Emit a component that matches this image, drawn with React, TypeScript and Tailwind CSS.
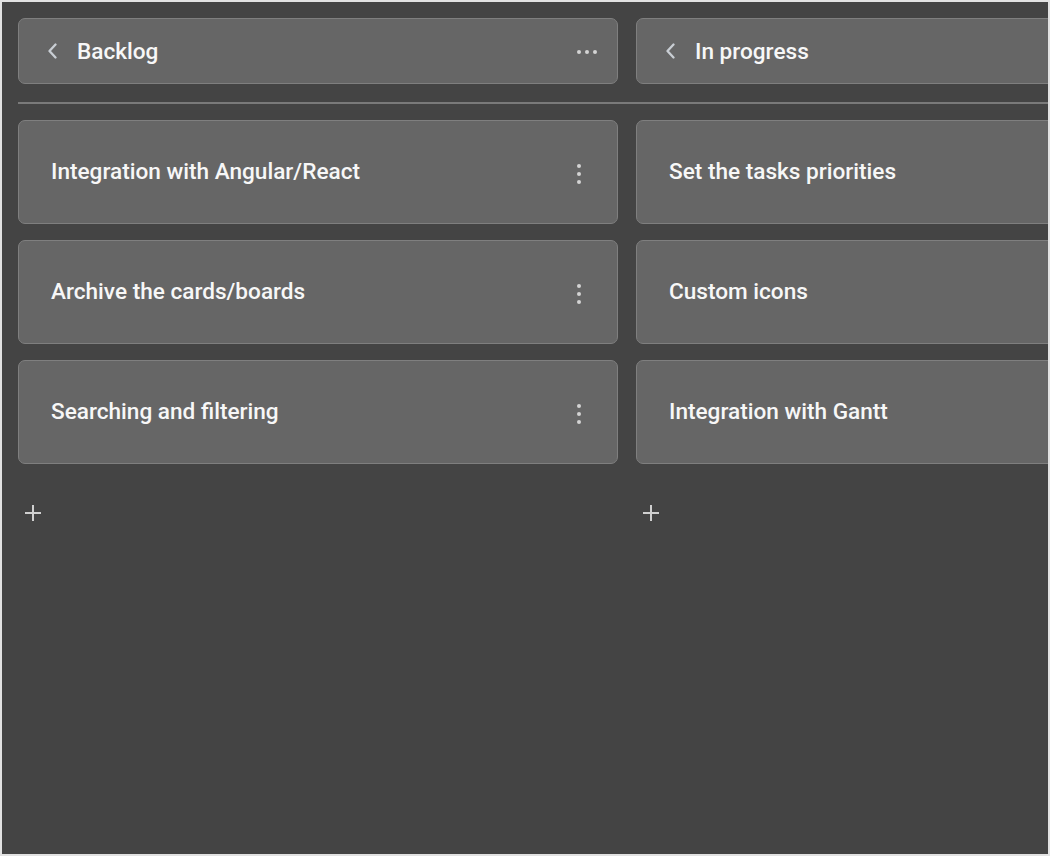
import React from "react";

const backlog = ["Integration with Angular/React", "Archive the cards/boards", "Searching and filtering"];
const progress = ["Set the tasks priorities", "Custom icons", "Integration with Gantt"];

function Chevron() {
  return (
    <svg width="12" height="16" viewBox="0 0 12 16" className="shrink-0">
      <path d="M9.5 1.5 L3.5 8 L9.5 14.5" fill="none" stroke="#c9ced4" strokeWidth="2.3" strokeLinecap="round" strokeLinejoin="round" />
    </svg>
  );
}

function HDots() {
  return (
    <div className="flex items-center gap-[3.5px] mt-[2px]">
      <span className="w-[4.5px] h-[4.5px] rounded-full bg-[#d4d4d4]" />
      <span className="w-[4.5px] h-[4.5px] rounded-full bg-[#d4d4d4]" />
      <span className="w-[4.5px] h-[4.5px] rounded-full bg-[#d4d4d4]" />
    </div>
  );
}

function VDots() {
  return (
    <div className="flex flex-col items-center gap-[3.5px] mt-[4px]">
      <span className="w-[4.5px] h-[4.5px] rounded-full bg-[#d4d4d4]" />
      <span className="w-[4.5px] h-[4.5px] rounded-full bg-[#d4d4d4]" />
      <span className="w-[4.5px] h-[4.5px] rounded-full bg-[#d4d4d4]" />
    </div>
  );
}

function Plus() {
  return (
    <svg width="18" height="18" viewBox="0 0 18 18">
      <path d="M9 1 V17 M1 9 H17" stroke="#d0d0d0" strokeWidth="2" />
    </svg>
  );
}

function Column({ cards, showMenu }: { cards: string[]; showMenu: boolean }) {
  return (
    <div className="w-[600px] shrink-0 flex flex-col gap-[16px]">
      {cards.map((c) => (
        <div
          key={c}
          className="h-[104px] rounded-[7px] border border-[#7f7f7f] bg-[#666666] flex items-center justify-between pl-[32px] pr-[36px]"
        >
          <span className="text-[22.6px] font-medium text-[#f7f7f7]">{c}</span>
          {showMenu && <VDots />}
        </div>
      ))}
      <div className="pl-[6px] pt-[24px]">
        <Plus />
      </div>
    </div>
  );
}

export default function App() {
  return (
    <div
      className="w-[1050px] h-[856px] border-2 border-[#e2e2e2] bg-[#444444] overflow-hidden"
      style={{ fontFamily: "Roboto, 'Noto Sans', sans-serif" }}
    >
      <div className="pl-[16px] pt-[16px]">
        <div className="flex gap-[18px]">
          <div className="w-[600px] shrink-0 h-[66px] rounded-[7px] border border-[#7f7f7f] bg-[#666666] flex items-center justify-between pl-[27px] pr-[20px]">
            <div className="flex items-center gap-[19px]">
              <Chevron />
              <span className="text-[22.6px] font-medium text-[#f7f7f7] leading-none mt-[2px]">Backlog</span>
            </div>
            <HDots />
          </div>
          <div className="w-[600px] shrink-0 h-[66px] rounded-[7px] border border-[#7f7f7f] bg-[#666666] flex items-center justify-between pl-[27px] pr-[20px]">
            <div className="flex items-center gap-[19px]">
              <Chevron />
              <span className="text-[22.6px] font-medium text-[#f7f7f7] leading-none mt-[2px]">In progress</span>
            </div>
            <HDots />
          </div>
        </div>
        <div className="h-[2px] bg-[#7a7a7a] mt-[18px]" />
        <div className="flex gap-[18px] mt-[16px]">
          <Column cards={backlog} showMenu={true} />
          <Column cards={progress} showMenu={true} />
        </div>
      </div>
    </div>
  );
}
